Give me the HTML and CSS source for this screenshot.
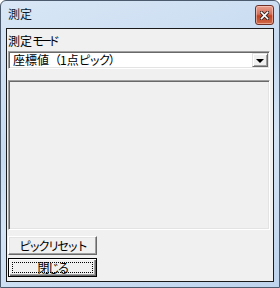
FILE: index.html
```html
<!DOCTYPE html>
<html lang="ja">
<head>
    <meta charset="UTF-8">
    <title>測定</title>
    <link rel="stylesheet" href="styles.css">
</head>
<body>

<div class="window">
    <!-- Title bar -->
    <div class="titlebar">
        <span class="title">測定</span>
        <button class="close-x" title="閉じる">
            <svg width="9" height="9" viewBox="0 0 9 9">
                <path d="M1.5 1.5 L7.5 7.5 M7.5 1.5 L1.5 7.5" stroke="#3b2a28" stroke-width="3.4" stroke-linecap="square"/>
                <path d="M1.5 1.5 L7.5 7.5 M7.5 1.5 L1.5 7.5" stroke="#ffffff" stroke-width="1.6" stroke-linecap="square"/>
            </svg>
        </button>
    </div>

    <!-- Client area -->
    <div class="client">
        <div class="field-label">測定<span class="kana">モード</span></div>

        <div class="combo">
            <span class="combo-text">座標値<span class="paren">（</span>1点<span class="kana-s">ピック</span><span class="paren">）</span></span>
            <span class="combo-btn"><span class="arrow"></span></span>
        </div>

        <div class="result-panel"></div>

        <button class="btn"><span class="btn-text">ピックリセット</span></button>
        <button class="btn btn-default"><span class="focus">閉じる</span></button>
    </div>
</div>

</body>
</html>
```

FILE: styles.css
```css
html, body {
    margin: 0;
    padding: 0;
    background: #ffffff;
}

/* Window frame */
.window {
    width: 280px;
    height: 288px;
    box-sizing: border-box;
    border: 1px solid #4b5a6c;
    border-radius: 6px 6px 0 0;
    padding: 0 5px 5px 5px;
    background: linear-gradient(160deg, #d9e7f6 0%, #c6daf0 40%, #d4e4f5 60%, #bfd4ed 100%);
    display: flex;
    flex-direction: column;
    font-family: "Noto Sans CJK JP", "Noto Sans", sans-serif;
    font-size: 12px;
    color: #000;
}

/* Title bar */
.titlebar {
    height: 27px;
    display: flex;
    justify-content: space-between;
    align-items: flex-start;
}

.title {
    padding: 5px 0 0 2px;
    line-height: 16px;
    color: #0c1a2c;
}

.close-x {
    margin-top: 4px;
    width: 19px;
    height: 20px;
    padding: 0;
    border: 1px solid #6e3026;
    border-radius: 3px;
    background: linear-gradient(to bottom, #e8a08e 0%, #d5705a 45%, #c1401f 55%, #cf6a4a 100%);
    display: flex;
    align-items: center;
    justify-content: center;
    box-shadow: inset 0 0 0 1px rgba(255, 220, 210, 0.5);
}

/* Client area */
.client {
    flex: 1;
    border: 1px solid #1a1a1a;
    background: #f0f0f0;
    padding: 5px 3px 0 1px;
    display: flex;
    flex-direction: column;
    align-items: flex-start;
}

.field-label {
    line-height: 14px;
    height: 14px;
}

/* narrow katakana, closer to the system UI font */
.kana {
    letter-spacing: -4px;
}

.kana-s {
    letter-spacing: -2px;
}

.paren {
    letter-spacing: -1px;
}

/* Sunken 3D edge used by combo and panel */
.combo, .result-panel {
    box-sizing: border-box;
    border-style: solid;
    border-width: 1px;
    border-color: #a0a0a0 #ffffff #ffffff #a0a0a0;
    box-shadow: inset 1px 1px 0 #696969, inset -1px -1px 0 #e3e3e3;
}

.combo {
    margin-top: 3px;
    width: 262px;
    height: 18px;
    background: #ffffff;
    display: flex;
    align-items: center;
    justify-content: space-between;
    padding: 1px;
}

.combo-text {
    padding-left: 3px;
    line-height: 14px;
}

.combo-btn {
    width: 16px;
    height: 14px;
    box-sizing: border-box;
    background: #f0f0f0;
    border-style: solid;
    border-width: 1px;
    border-color: #e3e3e3 #696969 #696969 #e3e3e3;
    box-shadow: inset 1px 1px 0 #ffffff, inset -1px -1px 0 #a0a0a0;
    display: flex;
    align-items: center;
    justify-content: center;
}

.arrow {
    width: 0;
    height: 0;
    border-left: 4px solid transparent;
    border-right: 4px solid transparent;
    border-top: 4px solid #000;
    margin-top: 1px;
}

.result-panel {
    margin-top: 11px;
    width: 262px;
    height: 150px;
    background: #f0f0f0;
}

/* Push buttons */
.btn {
    width: 89px;
    height: 19px;
    box-sizing: border-box;
    margin-top: 6px;
    padding: 0;
    font-family: "Noto Sans CJK JP", "Noto Sans", sans-serif;
    font-size: 12px;
    line-height: 14px;
    color: #000;
    background: #f0f0f0;
    border-style: solid;
    border-width: 1px;
    border-color: #ffffff #696969 #696969 #ffffff;
    box-shadow: inset -1px -1px 0 #a0a0a0, inset 1px 1px 0 #e3e3e3;
}

.btn-text {
    letter-spacing: -2.5px;
}

.btn-default {
    margin-top: 3px;
    border: 1px solid #000;
    box-shadow: inset 1px 1px 0 #ffffff, inset -1px -1px 0 #696969, inset -2px -2px 0 #a0a0a0;
    padding: 3px;
    display: flex;
}

.focus {
    flex: 1;
    border: 1px dotted #000;
    line-height: 9px;
    letter-spacing: -2px;
    display: flex;
    align-items: center;
    justify-content: center;
}
```
